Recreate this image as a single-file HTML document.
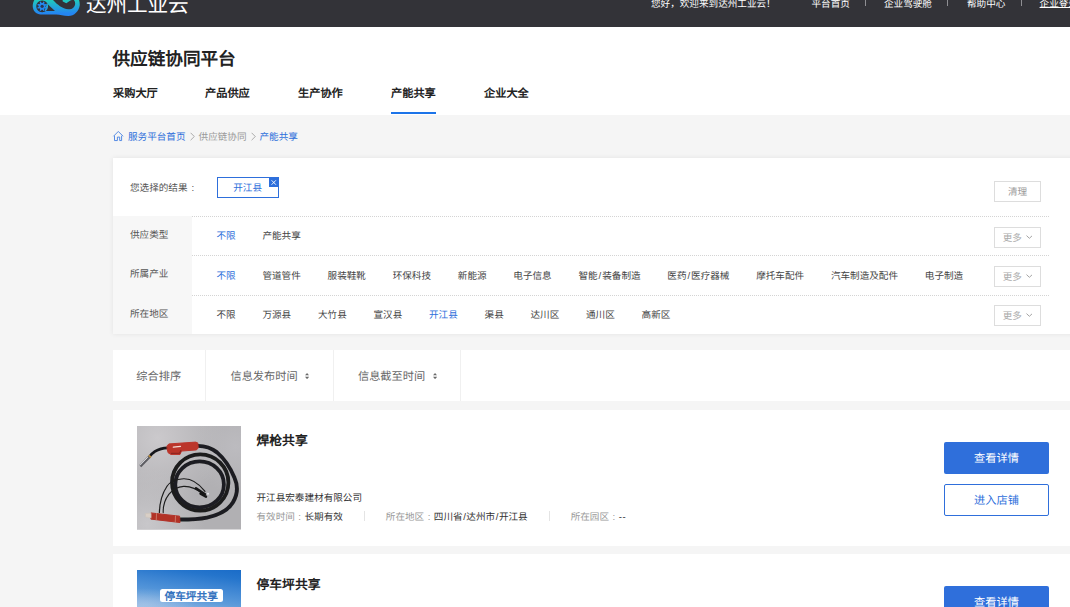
<!DOCTYPE html>
<html lang="zh-CN">
<head>
<meta charset="utf-8">
<title>供应链协同平台</title>
<style>
*{box-sizing:border-box;margin:0;padding:0}
html,body{width:1070px;height:607px;overflow:hidden}
body{text-rendering:geometricPrecision;background:#f5f5f5;font-family:"Liberation Sans",sans-serif;font-size:9.6px;color:#333;position:relative;line-height:1}
a{text-decoration:none;color:inherit}
.abs{position:absolute;white-space:nowrap}
#hdr{position:absolute;left:0;top:0;width:1070px;height:26.7px;background:#333338;overflow:hidden}
#hdr .t{position:absolute;top:-0.3px;color:#fff;font-size:9.6px;line-height:10px;white-space:nowrap}
#hdr .sep{position:absolute;top:-2.6px;width:1px;height:8.2px;background:#8f8f93}
#logotxt{position:absolute;left:86px;top:-6.4px;font-size:20.6px;line-height:24px;color:#fff;white-space:nowrap;font-weight:300;letter-spacing:-0.1px}
#nav{position:absolute;left:0;top:26.7px;width:1070px;height:88.3px;background:#fff}
#title{position:absolute;left:112.5px;top:22.2px;font-size:17.6px;font-weight:bold;color:#222;line-height:20px;white-space:nowrap}
.nv{position:absolute;top:60.6px;font-size:11.2px;font-weight:bold;color:#222;line-height:14px;white-space:nowrap}
#uline{position:absolute;left:391px;top:85px;width:45px;height:2.3px;background:#1c74e9}
#crumb{position:absolute;left:128px;top:132.2px;font-size:9.6px;line-height:11px;white-space:nowrap;color:#999}
#crumb b{font-weight:normal;color:#2e6fdb}
#crumb i{font-style:normal;display:inline-block;width:5px;margin:0 4px;color:#999}
#filter{position:absolute;left:113px;top:157.5px;width:970px;height:176px;background:#fff;box-shadow:0 0 5px rgba(0,0,0,.08)}
#filter .lab{position:absolute;left:0;top:58.5px;width:79px;height:117.5px;background:#f7f7f7}
#filter .dl{position:absolute;left:79px;width:857px;height:0;border-top:1px dotted #d4d4d4}
#filter .lt{position:absolute;left:17px;font-size:9.6px;line-height:11px;color:#555;white-space:nowrap}
#filter .row{position:absolute;left:103.5px;font-size:9.6px;line-height:11px;color:#444;white-space:nowrap}
#filter .row span{display:inline-block;margin-right:26.75px}
#filter .row span.on{color:#2e6fdb}
#filter .row u{text-decoration:none;padding:0 0.95px}
.more{position:absolute;left:880.75px;width:47.5px;height:20.5px;border:1px solid #ddd;color:#aaa;font-size:9.6px;line-height:18.5px;padding-top:1.7px;text-align:center;background:#fff;white-space:nowrap}
#tag{position:absolute;left:103.75px;top:19.5px;width:61.75px;height:20.5px;border:1px solid #2e6fdb;color:#2e6fdb;font-size:9.6px;line-height:18.5px;padding-top:2px;text-align:center}
#tag em{position:absolute;right:-0.5px;top:0;width:9.5px;height:9px;background:#2e6fdb;display:block}
#sort{position:absolute;left:113px;top:350px;width:970px;height:50.75px;background:#fff}
#sort .c{position:absolute;top:0;height:50.75px;border-right:1px solid #f0f0f0;font-size:11.2px;line-height:54.2px;color:#666;text-align:center;white-space:nowrap}
.card{position:absolute;left:113px;width:970px;height:136px;background:#fff}
.card .img{position:absolute;left:24px;top:16.5px;width:104px;height:103.5px;overflow:hidden}
.card .ttl{position:absolute;left:143.5px;top:23.4px;font-size:12.8px;font-weight:bold;color:#222;line-height:16px;white-space:nowrap}
.card .co{position:absolute;left:143.5px;top:83.2px;font-size:9.6px;line-height:11px;color:#333;white-space:nowrap}
.card .inf{position:absolute;left:143.5px;top:101.4px;font-size:9.6px;line-height:11px;color:#999;white-space:nowrap}
.card .inf b{font-weight:normal;color:#333}
.card .inf u{text-decoration:none;padding:0 0.55px}
.card .inf s{display:inline-block;width:9.6px;text-align:center;text-decoration:none}
.card .inf i{display:inline-block;width:1px;height:10px;background:#e4e4e4;margin:0 21px 0 21px;vertical-align:-1px}
.btn1{position:absolute;left:831px;top:32.5px;width:105px;height:32px;background:#2f6fdb;color:#fff;border-radius:2px;font-size:11.2px;line-height:34.8px;text-align:center;overflow:hidden}
.btn2{position:absolute;left:831px;top:74.5px;width:105px;height:32px;background:#fff;color:#2e6fdb;border:1px solid #2f6fdb;border-radius:2px;font-size:11.2px;line-height:32.8px;text-align:center;overflow:hidden}
</style>
</head>
<body>
<div id="hdr">
  <svg class="abs" style="left:30px;top:0" width="54" height="18" viewBox="0 0 1070 357">
    <defs><linearGradient id="lg" x1="0" y1="0" x2="0" y2="1"><stop offset="0" stop-color="#1fd2b6"/><stop offset="0.45" stop-color="#22a9d6"/><stop offset="0.85" stop-color="#2486f2"/><stop offset="1" stop-color="#2486f2"/></linearGradient></defs>
    <path fill="url(#lg)" fill-rule="evenodd" d="M100 -30 C60 40 45 100 58 160 C72 230 130 285 210 287 L520 287 C600 290 660 318 760 318 C880 318 970 220 985 110 C990 50 975 0 960 -30 Z M240 8 A117 117 0 1 0 241 8 Z M335 70 L495 217 L290 217 Z M455 -30 L460 5 C540 90 640 175 760 185 C840 188 890 140 895 80 C897 40 880 10 860 -10 L800 10 L720 62 L650 30 L640 -30 Z"/>
    <path fill="#2389ee" d="M307 136 L335 150 L325 174 L295 165 L280 180 L289 210 L265 220 L251 192 L229 192 L215 220 L191 210 L200 180 L185 165 L155 174 L145 150 L173 136 L173 114 L145 100 L155 76 L185 85 L200 70 L191 40 L215 30 L229 58 L251 58 L265 30 L289 40 L280 70 L295 85 L325 76 L335 100 L307 114 Z"/>
    <circle cx="240" cy="125" r="32" fill="#2c3550"/>
  </svg>
  <div id="logotxt">达州工业云</div>
  <div class="t" style="left:651px">您好，欢迎来到达州工业云！</div>
  <div class="t" style="left:811.5px">平台首页</div>
  <div class="sep" style="left:865.2px"></div>
  <div class="t" style="left:884px">企业驾驶舱</div>
  <div class="sep" style="left:947.2px"></div>
  <div class="t" style="left:967px">帮助中心</div>
  <div class="sep" style="left:1021px"></div>
  <div class="t" style="left:1039.6px;text-decoration:underline;text-underline-offset:-0.2px;text-decoration-thickness:0.8px">企业登录</div>
</div>

<div id="nav">
  <div id="title">供应链协同平台</div>
  <div class="nv" style="left:113px">采购大厅</div>
  <div class="nv" style="left:205px">产品供应</div>
  <div class="nv" style="left:298px">生产协作</div>
  <div class="nv" style="left:391px">产能共享</div>
  <div class="nv" style="left:484px">企业大全</div>
  <div id="uline"></div>
</div>

<svg class="abs" style="left:112px;top:130px" width="12" height="12" viewBox="0 0 12 12"><path d="M1.75 6.0 L6.3 1.45 L10.85 6.0 M2.5 6.2 V10.55 H5.4 V7.1 H7.7 V10.55 H9.6 V6.2" fill="none" stroke="#4480e2" stroke-width="0.9" stroke-linejoin="round" stroke-linecap="round"/></svg>
<div id="crumb"><b>服务平台首页</b><svg width="5" height="9" viewBox="0 0 5 9" style="margin:0 4px;vertical-align:-1.3px"><path d="M0.6 0.8 L4.3 4.5 L0.6 8.2" fill="none" stroke="#9a9a9a" stroke-width="0.8"/></svg>供应链协同<svg width="5" height="9" viewBox="0 0 5 9" style="margin:0 4px;vertical-align:-1.3px"><path d="M0.6 0.8 L4.3 4.5 L0.6 8.2" fill="none" stroke="#9a9a9a" stroke-width="0.8"/></svg><b>产能共享</b></div>

<div id="filter">
  <div class="lab"></div>
  <div class="dl" style="top:58.5px"></div>
  <div class="dl" style="top:97.7px"></div>
  <div class="dl" style="top:137.2px"></div>
  <div class="lt" style="top:25.5px">您选择的结果<span style="margin-left:4px">:</span></div>
  <div id="tag">开江县<em><svg width="9.5" height="9" viewBox="0 0 9.5 9" style="position:absolute;left:0;top:0"><path d="M2.6 2.3 L6.9 6.7 M6.9 2.3 L2.6 6.7" stroke="#fff" stroke-width="0.9"/></svg></em></div>
  <div class="more" style="top:23.5px;color:#999">清理</div>

  <div class="lt" style="top:72.6px">供应类型</div>
  <div class="row" style="top:73.4px"><span class="on">不限</span><span>产能共享</span></div>
  <div class="more" style="top:69.5px">更多 <svg width="6.8" height="4" viewBox="0 0 6.8 4" style="vertical-align:1.7px;margin-left:1.1px"><path d="M0.5 0.6 L3.4 3.3 L6.3 0.6" fill="none" stroke="#a4a4a4" stroke-width="1"/></svg></div>

  <div class="lt" style="top:111.8px">所属产业</div>
  <div class="row" style="top:113px"><span class="on">不限</span><span>管道管件</span><span>服装鞋靴</span><span>环保科技</span><span>新能源</span><span>电子信息</span><span>智能<u>/</u>装备制造</span><span>医药<u>/</u>医疗器械</span><span>摩托车配件</span><span>汽车制造及配件</span><span>电子制造</span></div>
  <div class="more" style="top:108.5px">更多 <svg width="6.8" height="4" viewBox="0 0 6.8 4" style="vertical-align:1.7px;margin-left:1.1px"><path d="M0.5 0.6 L3.4 3.3 L6.3 0.6" fill="none" stroke="#a4a4a4" stroke-width="1"/></svg></div>

  <div class="lt" style="top:151.3px">所在地区</div>
  <div class="row" style="top:152.7px"><span>不限</span><span>万源县</span><span>大竹县</span><span>宣汉县</span><span class="on">开江县</span><span>渠县</span><span>达川区</span><span>通川区</span><span>高新区</span></div>
  <div class="more" style="top:147.5px">更多 <svg width="6.8" height="4" viewBox="0 0 6.8 4" style="vertical-align:1.7px;margin-left:1.1px"><path d="M0.5 0.6 L3.4 3.3 L6.3 0.6" fill="none" stroke="#a4a4a4" stroke-width="1"/></svg></div>
</div>

<div id="sort">
  <div class="c" style="left:0;width:92.5px">综合排序</div>
  <div class="c" style="left:92.5px;width:128px;padding-left:1.8px">信息发布时间<svg width="4.1" height="6.2" viewBox="0 0 4.4 6.6" style="margin-left:7.6px;vertical-align:0.8px"><path d="M0 2.5 L2.2 0 L4.4 2.5 Z M0 4.1 L2.2 6.6 L4.4 4.1 Z" fill="#6a6a6a"/></svg></div>
  <div class="c" style="left:220.5px;width:127px;padding-left:1.8px">信息截至时间<svg width="4.1" height="6.2" viewBox="0 0 4.4 6.6" style="margin-left:7.6px;vertical-align:0.8px"><path d="M0 2.5 L2.2 0 L4.4 2.5 Z M0 4.1 L2.2 6.6 L4.4 4.1 Z" fill="#6a6a6a"/></svg></div>
</div>

<div class="card" style="top:409.5px">
  <div class="img" id="img1"><svg width="104" height="103.5" viewBox="0 0 104 104" preserveAspectRatio="none" style="display:block">
<defs>
<radialGradient id="bg1" cx="0.2" cy="0.12" r="0.65"><stop offset="0" stop-color="#cbc9cc"/><stop offset="1" stop-color="#cbc9cc" stop-opacity="0"/></radialGradient>
<radialGradient id="bg2" cx="0.1" cy="0.95" r="0.55"><stop offset="0" stop-color="#c8c7ca"/><stop offset="1" stop-color="#c8c7ca" stop-opacity="0"/></radialGradient>
<radialGradient id="bg3" cx="0.95" cy="0.2" r="0.45"><stop offset="0" stop-color="#bcbbbf"/><stop offset="1" stop-color="#bcbbbf" stop-opacity="0"/></radialGradient>
<filter id="bl" x="-5%" y="-5%" width="110%" height="110%"><feGaussianBlur stdDeviation="0.4"/></filter>
</defs>
<rect width="104" height="104" fill="#b1b0b3"/>
<rect width="104" height="104" fill="url(#bg1)"/>
<rect width="104" height="104" fill="url(#bg2)"/>
<rect width="104" height="104" fill="url(#bg3)"/>
<g filter="url(#bl)" fill="none" stroke-linecap="round" stroke-linejoin="round">
<!-- outer cable -->
<path d="M60 20 C68 19.8 75 22.5 80 26.5 C87 32.5 93 41 97.5 52 C101 60 100.5 69 96 76.5 C91 85 82 89.5 70 92 C62 93.6 52 94 43 94" stroke="#1d1e20" stroke-width="3.9"/>
<!-- inner loops -->
<ellipse cx="63.2" cy="56.8" rx="28.2" ry="28.3" stroke="#1b1c1e" stroke-width="3.8"/>
<ellipse cx="62.6" cy="58.7" rx="24.3" ry="23.1" stroke="#1e1f21" stroke-width="3.8"/>
<!-- thin wires -->
<path d="M22.4 87 C22.6 78 25 68 30 60.5 C33 56 38 53.6 46.6 53 C54 52.8 62 58 68 65.6" stroke="#1c1c1c" stroke-width="1.2"/>
<path d="M26.2 87 C26 80 28.5 73 32 68.5 C36 63.5 41 61 46.6 60.7 C52 60.5 58 61.5 66 68.5" stroke="#1c1c1c" stroke-width="1.1"/>
<path d="M59 62.5 L68 68.5 M63.5 68 L69 71" stroke="#151515" stroke-width="2.4"/>
<circle cx="71" cy="68" r="1" fill="#e8e8ee" stroke="none"/>
<!-- gooseneck -->
<path d="M31 21.9 C26 22 21.4 23.3 18 25.5 C15.5 27.2 14 28.8 12.8 30.4" stroke="#17181a" stroke-width="2.7"/>
<path d="M13.4 29.8 L12 31.5" stroke="#b98a3a" stroke-width="3" stroke-linecap="butt"/>
<path d="M12.2 31.2 L3.2 40.4" stroke="#5d5d62" stroke-width="3" stroke-linecap="butt"/>
<path d="M10.9 31.3 L2.7 39.7" stroke="#dcdce2" stroke-width="1" stroke-linecap="butt"/>
<!-- upper handle -->
<path d="M30.3 19.6 L32 18 L58.5 16.2 L60.8 17 L61.2 22 L59.5 24 L44.5 25.2 L43 28.6 L34 28.6 L31.2 27 L30.2 23.5 Z" fill="#bb352b" stroke="#bb352b" stroke-width="1"/>
<path d="M34.5 27.6 L42.5 27.4 L43.8 24.8" stroke="#8e2620" stroke-width="1.2"/>
<path d="M36.3 21.2 L43.5 20.4" stroke="#f3dcd6" stroke-width="1.2"/>
<!-- lower handle -->
<path d="M14.3 87.4 L42.6 90.6 L43 97 L14.3 93.6 Z" fill="#b23127" stroke="#b23127" stroke-width="1"/>
<path d="M19.5 88 L19.3 94.2 M38.5 90.4 L38.3 96.4" stroke="#d9a58d" stroke-width="0.6"/>
<path d="M8.6 88 L14 87.6 L14 92.2 L8.8 91.4 Z" fill="#d9cfc6" stroke="#cfc4ba" stroke-width="0.6"/>
</g>
</svg></div>
  <div class="ttl">焊枪共享</div>
  <div class="co">开江县宏泰建材有限公司</div>
  <div class="inf">有效时间<s>:</s><b>长期有效</b><i></i>所在地区<s>:</s><b>四川省<u>/</u>达州市<u>/</u>开江县</b><i></i>所在园区<s>:</s><b style="letter-spacing:0.7px">--</b></div>
  <div class="btn1">查看详情</div>
  <div class="btn2">进入店铺</div>
</div>

<div class="card" style="top:553.75px">
  <div class="img" id="img2"><div style="position:absolute;left:0;top:0;width:104px;height:104px;background:radial-gradient(ellipse 50px 16px at 8% 33%,rgba(175,203,233,.55),rgba(175,203,233,0) 100%),linear-gradient(188deg,#1a6cc8 0%,#2575cc 8%,#3a83d2 16%,#4f92d8 25%,#5f9cda 31%,#7fade0 38%,#9abde4 44%,#b5cfea 60%,#c5d8ec 100%)"></div>
<div style="position:absolute;left:22.7px;top:19px;width:63px;height:12.8px;background:#fff;border-radius:2.5px;color:#3674c0;font-weight:bold;font-size:10.7px;line-height:11px;padding-top:3px;text-align:center;white-space:nowrap;overflow:hidden">停车坪共享</div></div>
  <div class="ttl">停车坪共享</div>
  <div class="btn1">查看详情</div>
</div>
</body>
</html>
